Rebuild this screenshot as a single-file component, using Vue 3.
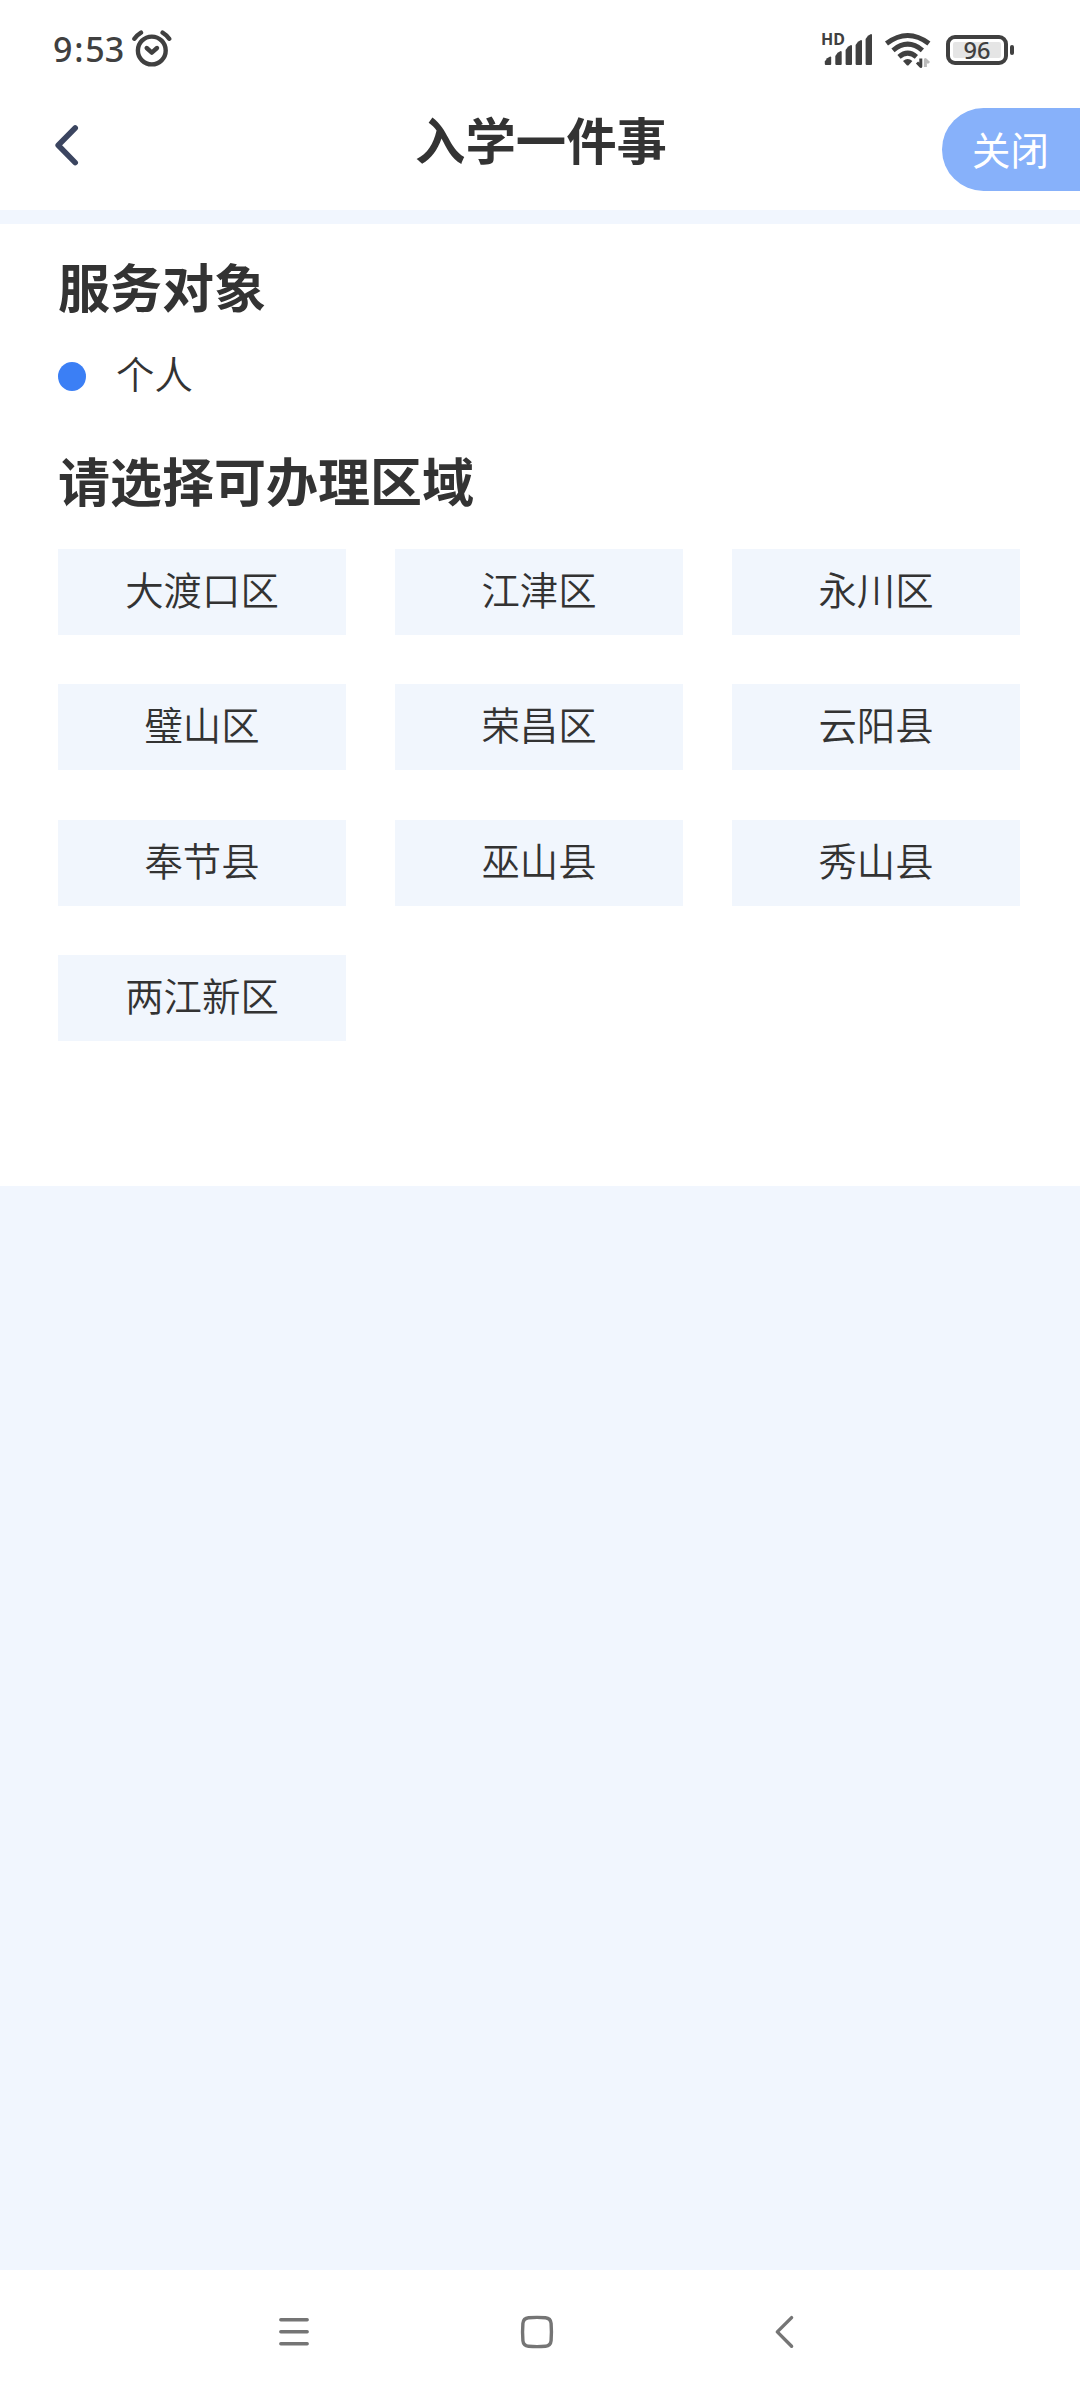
<template>
    <div class="page">
        <div class="status_bar">
            <span class="time">9<span class="colon">:</span>53</span>
            <svg class="alarm" width="42" height="40" viewBox="131 30 42 40">
                <circle cx="151.8" cy="50.5" r="13.9" />
                <path d="M134.4 38.8 Q137 35 141 32.6 M162.6 32.6 Q166.6 35 169.2 38.8" />
                <path d="M146.7 48 L151.8 52.6 L157 48" />
            </svg>
            <div class="status_right">
                <div class="signal">
                    <span class="hd">HD</span>
                    <svg width="52" height="36" viewBox="822 32 52 36">
                        <path v-for="bar in bars" :key="bar[0]" :d="barPath(bar)" />
                    </svg>
                </div>
                <svg class="wifi" width="48" height="38" viewBox="884 31 48 38">
                    <path d="M886.5 43.5 Q907.7 27.5 928.9 43.5" />
                    <path d="M893 50.3 Q907.7 38 922.4 50.3" />
                    <path d="M899 56.8 Q907.7 49.5 916.4 56.8" />
                    <path class="wifi_dot" d="M903 61 Q907.7 57 912.4 61 L908.6 65.2 Q907.7 66 906.8 65.2 Z" />
                    <path class="arrow" d="M920.8 58.5 V66.5 L917 62.5" />
                    <path class="arrow light" d="M925.4 67 V59.5 L929 63" />
                </svg>
                <div class="battery">
                    <div class="battery_body"><div class="battery_level">96</div></div>
                    <div class="battery_tip"></div>
                </div>
            </div>
        </div>
        <div class="header">
            <svg class="back" width="30" height="48" viewBox="52 121 30 48">
                <path d="M75.2 128 L58.2 145.3 L75.2 162.6" />
            </svg>
            <div class="title">入学一件事</div>
            <div class="close">关闭</div>
        </div>
        <div class="content">
            <div class="heading">服务对象</div>
            <div class="target">
                <i class="dot"></i>
                <span class="target_name">个人</span>
            </div>
            <div class="heading">请选择可办理区域</div>
            <div class="area_list">
                <div v-for="item in areas" :key="item" class="area" :class="{ active: item === current }" @click="current = item">{{ item }}</div>
            </div>
        </div>
        <div class="nav_bar">
            <svg width="36" height="36" viewBox="0 0 36 36">
                <path d="M4.8 5.8 H31.2 M4.8 17.8 H31.2 M4.8 29.8 H31.2" />
            </svg>
            <svg width="36" height="36" viewBox="0 0 36 36">
                <path d="M9.5 3.7 Q18 3 26.5 3.7 Q31.6 4.2 32.1 9.3 Q32.8 18 32.1 26.7 Q31.6 31.8 26.5 32.3 Q18 33 9.5 32.3 Q4.4 31.8 3.9 26.7 Q3.2 18 3.9 9.3 Q4.4 4.2 9.5 3.7 Z" />
            </svg>
            <svg width="36" height="36" viewBox="0 0 36 36">
                <path d="M25.6 3.6 L11.3 17.9 L25.6 32.2" />
            </svg>
        </div>
    </div>
</template>

<script setup lang='js'>
import { ref } from 'vue'

const areas = ['大渡口区', '江津区', '永川区', '璧山区', '荣昌区', '云阳县', '奉节县', '巫山县', '秀山县', '两江新区'];
const current = ref('');

// 信号格: [左边x, 顶部y]
const bars = [[824.8, 56.5], [835.3, 51], [845.6, 45], [855.6, 40], [865.6, 34]];

function barPath([x, y]) {
    const r = x + 6.4;
    return `M${x} 64 V${y + 5} Q${x + 2} ${y + 1} ${r - 1} ${y} Q${r} ${y} ${r} ${y + 1} V64 Q${r} 65 ${r - 1} 65 H${x + 1} Q${x} 65 ${x} 64 Z`;
}
</script>

<style>
body {
    margin: 0;
    background-color: #f1f6fe;
}
</style>

<style scoped>
.page {
    display: flex;
    flex-direction: column;
    width: 1080px;
    height: 2400px;
    overflow: hidden;
    background-color: #f1f6fe;
    color: #333;
    font-family: "Noto Sans CJK SC", sans-serif;
    font-weight: 350;
}

svg {
    display: block;
    flex: none;
    fill: none;
    stroke-linecap: round;
    stroke-linejoin: round;
}

.status_bar {
    display: flex;
    align-items: center;
    box-sizing: border-box;
    height: 100px;
    padding: 0 66px 0 53px;
    background-color: #fff;
    color: #404040;
}

.time {
    width: 78px;
    padding-bottom: 2px;
    font: 500 34px/48px "Noto Sans", sans-serif;
}

.colon {
    margin: 0 1.8px;
}

.alarm {
    stroke: #404040;
    stroke-width: 4.4;
}

.status_right {
    display: flex;
    align-items: center;
    margin-left: auto;
}

.signal {
    position: relative;
}

.signal svg {
    fill: #404040;
}

.hd {
    position: absolute;
    left: -1px;
    top: -1px;
    font: 700 16px/16px "Noto Sans", sans-serif;
}

.wifi {
    margin-left: 10px;
    stroke: #404040;
    stroke-width: 5;
    stroke-linecap: butt;
}

.wifi_dot {
    fill: #404040;
    stroke: none;
}

.arrow {
    stroke-width: 3;
}

.arrow.light {
    stroke: #bbb;
}

.battery {
    display: flex;
    align-items: center;
    margin: -1px 0 0 14px;
}

.battery_body {
    box-sizing: border-box;
    width: 62px;
    height: 30px;
    padding: 3px;
    border: 4px solid #404040;
    border-radius: 9px;
}

.battery_level {
    width: 48px;
    height: 16px;
    border-radius: 2px;
    background-color: #e5e5e5;
    font: 500 23.5px/17px "Noto Sans", sans-serif;
    text-align: center;
}

.battery_tip {
    width: 4px;
    height: 10px;
    margin-left: 2px;
    border-radius: 2px;
    background-color: #404040;
}

.header {
    display: grid;
    grid-template-columns: 138px 1fr 138px;
    align-items: start;
    box-sizing: border-box;
    height: 110px;
    background-color: #fff;
}

.back {
    margin: 21px 0 0 52px;
    stroke: #3b4560;
    stroke-width: 5.6;
}

.title {
    margin-top: 2px;
    padding-left: 2px;
    font-size: 50.4px;
    font-weight: 700;
    line-height: 74px;
    text-align: center;
}

.close {
    box-sizing: border-box;
    height: 83px;
    margin-top: 8px;
    padding-left: 30px;
    border-radius: 42px 0 0 42px;
    background-color: #87b1fa;
    color: #fff;
    font-size: 38.4px;
    font-weight: 400;
    line-height: 80px;
}

.content {
    box-sizing: border-box;
    height: 962px;
    margin-top: 14px;
    padding: 25px 60px 0 58px;
    background-color: #fff;
}

.heading {
    font-size: 52px;
    font-weight: 700;
    line-height: 74px;
}

.target {
    display: flex;
    align-items: center;
    height: 56px;
    margin: 25px 0 39px;
    font-size: 38.4px;
}

.target_name {
    height: 56px;
    line-height: 48px;
}

.dot {
    width: 28px;
    height: 29px;
    margin-right: 30px;
    border-radius: 50%;
    background-color: #3b7ff5;
}

.area_list {
    display: grid;
    grid-template-columns: repeat(3, 288px);
    gap: 49.2px 49px;
    margin-top: 31.7px;
}

.area {
    height: 86.3px;
    background-color: #f1f6fd;
    font-size: 38.4px;
    line-height: 79px;
    text-align: center;
    cursor: pointer;
}

.area.active {
    background-color: #3b7ff5;
    color: #fff;
}

.nav_bar {
    display: flex;
    align-items: flex-start;
    gap: 207px;
    box-sizing: border-box;
    height: 130.5px;
    margin-top: auto;
    padding: 44px 0 0 276px;
    background-color: #fff;
}

.nav_bar svg {
    stroke: #757575;
    stroke-width: 3.4;
}

.nav_bar svg:last-child {
    margin-left: 4px;
}
</style>
